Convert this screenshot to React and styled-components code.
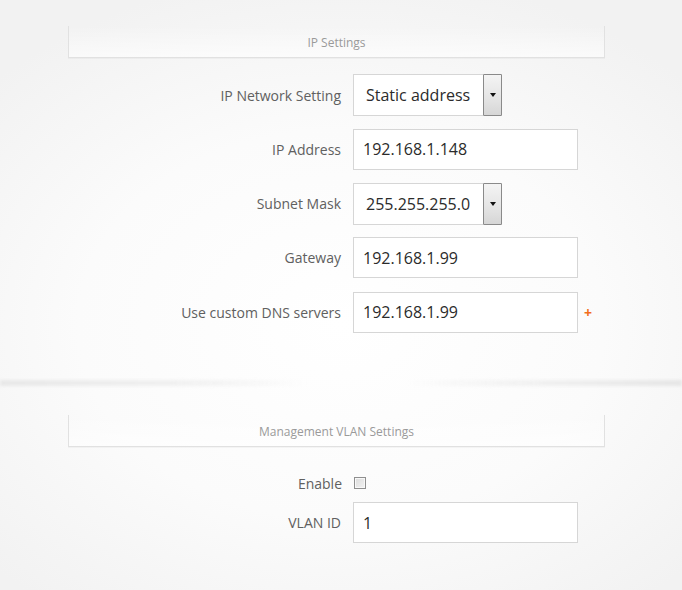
import React from 'react';
import styled, { createGlobalStyle } from 'styled-components';

const GlobalStyle = createGlobalStyle`
  html, body {
    margin: 0;
    padding: 0;
  }
  body {
    font-family: "Open Sans", "Liberation Sans", sans-serif;
    background: radial-gradient(ellipse 70% 60% at 50% 55%, #ffffff 0%, #fbfbfb 55%, #f2f2f2 100%);
    min-height: 590px;
  }
`;

const Page = styled.div`
  width: 682px;
  height: 590px;
  padding-top: 26px;
  box-sizing: border-box;
  overflow: hidden;
`;

const SectionHeader = styled.div`
  margin-left: 68px;
  width: 537px;
  height: 32px;
  box-sizing: border-box;
  border: 1px solid #e1e1e1;
  border-top: none;
  background: linear-gradient(to bottom, rgba(255,255,255,0) 0%, rgba(255,255,255,0.6) 100%);
  box-shadow: 0 1px 0 rgba(0,0,0,0.03);
  display: flex;
  align-items: center;
  justify-content: center;
  padding-top: 1px;
  font-size: 12px;
  color: #9a9a9a;
`;

const Rows = styled.div`
  display: flex;
  flex-direction: column;
  gap: ${p => p.$gap}px;
  margin-top: ${p => p.$top}px;
`;

const Row = styled.div`
  display: grid;
  grid-template-columns: ${p => p.$label}px auto;
  column-gap: 12px;
  align-items: center;
  height: ${p => p.$h}px;
`;

const Label = styled.div`
  text-align: right;
  font-size: 14px;
  color: #606060;
  white-space: nowrap;
`;

const Control = styled.div`
  display: flex;
  align-items: center;
  gap: 6px;
`;

const Input = styled.div`
  width: 225px;
  height: 41px;
  box-sizing: border-box;
  border: 1px solid #d6d6d6;
  background: #fff;
  padding-left: 9px;
  display: flex;
  align-items: center;
  font-size: 16px;
  color: #2b2b2b;
`;

const Select = styled.div`
  width: 149px;
  height: 42px;
  box-sizing: border-box;
  border: 1px solid #d6d6d6;
  background: #fff;
  display: flex;
  align-items: stretch;
  font-size: 16px;
  color: #2b2b2b;
`;

const SelectText = styled.div`
  flex: 1;
  display: flex;
  align-items: center;
  padding-left: 12px;
  white-space: nowrap;
`;

const DropButton = styled.div`
  width: 19px;
  box-sizing: border-box;
  margin: -1px -1px -1px 0;
  border: 1px solid #8a8a8a;
  border-radius: 1px;
  background: linear-gradient(to bottom, #f4f4f4 0%, #e4e4e4 60%, #d6d6d6 100%);
  display: flex;
  align-items: center;
  justify-content: center;
  &::after {
    content: '';
    border-left: 3px solid transparent;
    border-right: 3px solid transparent;
    border-top: 4px solid #111;
  }
`;

const Plus = styled.span`
  color: #f26d1d;
  font-size: 14px;
  font-weight: 700;
  line-height: 1;
  margin-top: 2px;
`;

const Separator = styled.div`
  height: 6px;
  margin-top: 47px;
  margin-bottom: 29px;
  background: linear-gradient(to right, #e8e8e8 0%, #f0f0f0 25%, rgba(255,255,255,0) 45%, rgba(255,255,255,0) 60%, #f0f0f0 80%, #e6e6e6 100%);
  filter: blur(1.5px);
`;

const Checkbox = styled.div`
  width: 12px;
  height: 12px;
  box-sizing: border-box;
  border: 1px solid #8f8f8f;
  background: linear-gradient(135deg, #dcdcdc 0%, #f2f2f2 100%);
  box-shadow: inset 0 0 0 1px #f8f8f8;
`;

function Field({ label, children, h = 42, labelWidth = 341 }) {
  return (
    <Row $h={h} $label={labelWidth}>
      <Label>{label}</Label>
      <Control>{children}</Control>
    </Row>
  );
}

export default function App() {
  return (
    <Page>
      <GlobalStyle />
      <SectionHeader>IP Settings</SectionHeader>
      <Rows $top={16} $gap={12.25}>
        <Field label="IP Network Setting">
          <Select>
            <SelectText>Static address</SelectText>
            <DropButton />
          </Select>
        </Field>
        <Field label="IP Address">
          <Input>192.168.1.148</Input>
        </Field>
        <Field label="Subnet Mask">
          <Select>
            <SelectText>255.255.255.0</SelectText>
            <DropButton />
          </Select>
        </Field>
        <Field label="Gateway">
          <Input>192.168.1.99</Input>
        </Field>
        <Field label="Use custom DNS servers">
          <Input>192.168.1.99</Input>
          <Plus>+</Plus>
        </Field>
      </Rows>
      <Separator />
      <SectionHeader>Management VLAN Settings</SectionHeader>
      <Rows $top={26} $gap={9}>
        <Field label="Enable" h={20} labelWidth={342}>
          <Checkbox />
        </Field>
        <Field label="VLAN ID" h={41}>
          <Input>1</Input>
        </Field>
      </Rows>
    </Page>
  );
}
